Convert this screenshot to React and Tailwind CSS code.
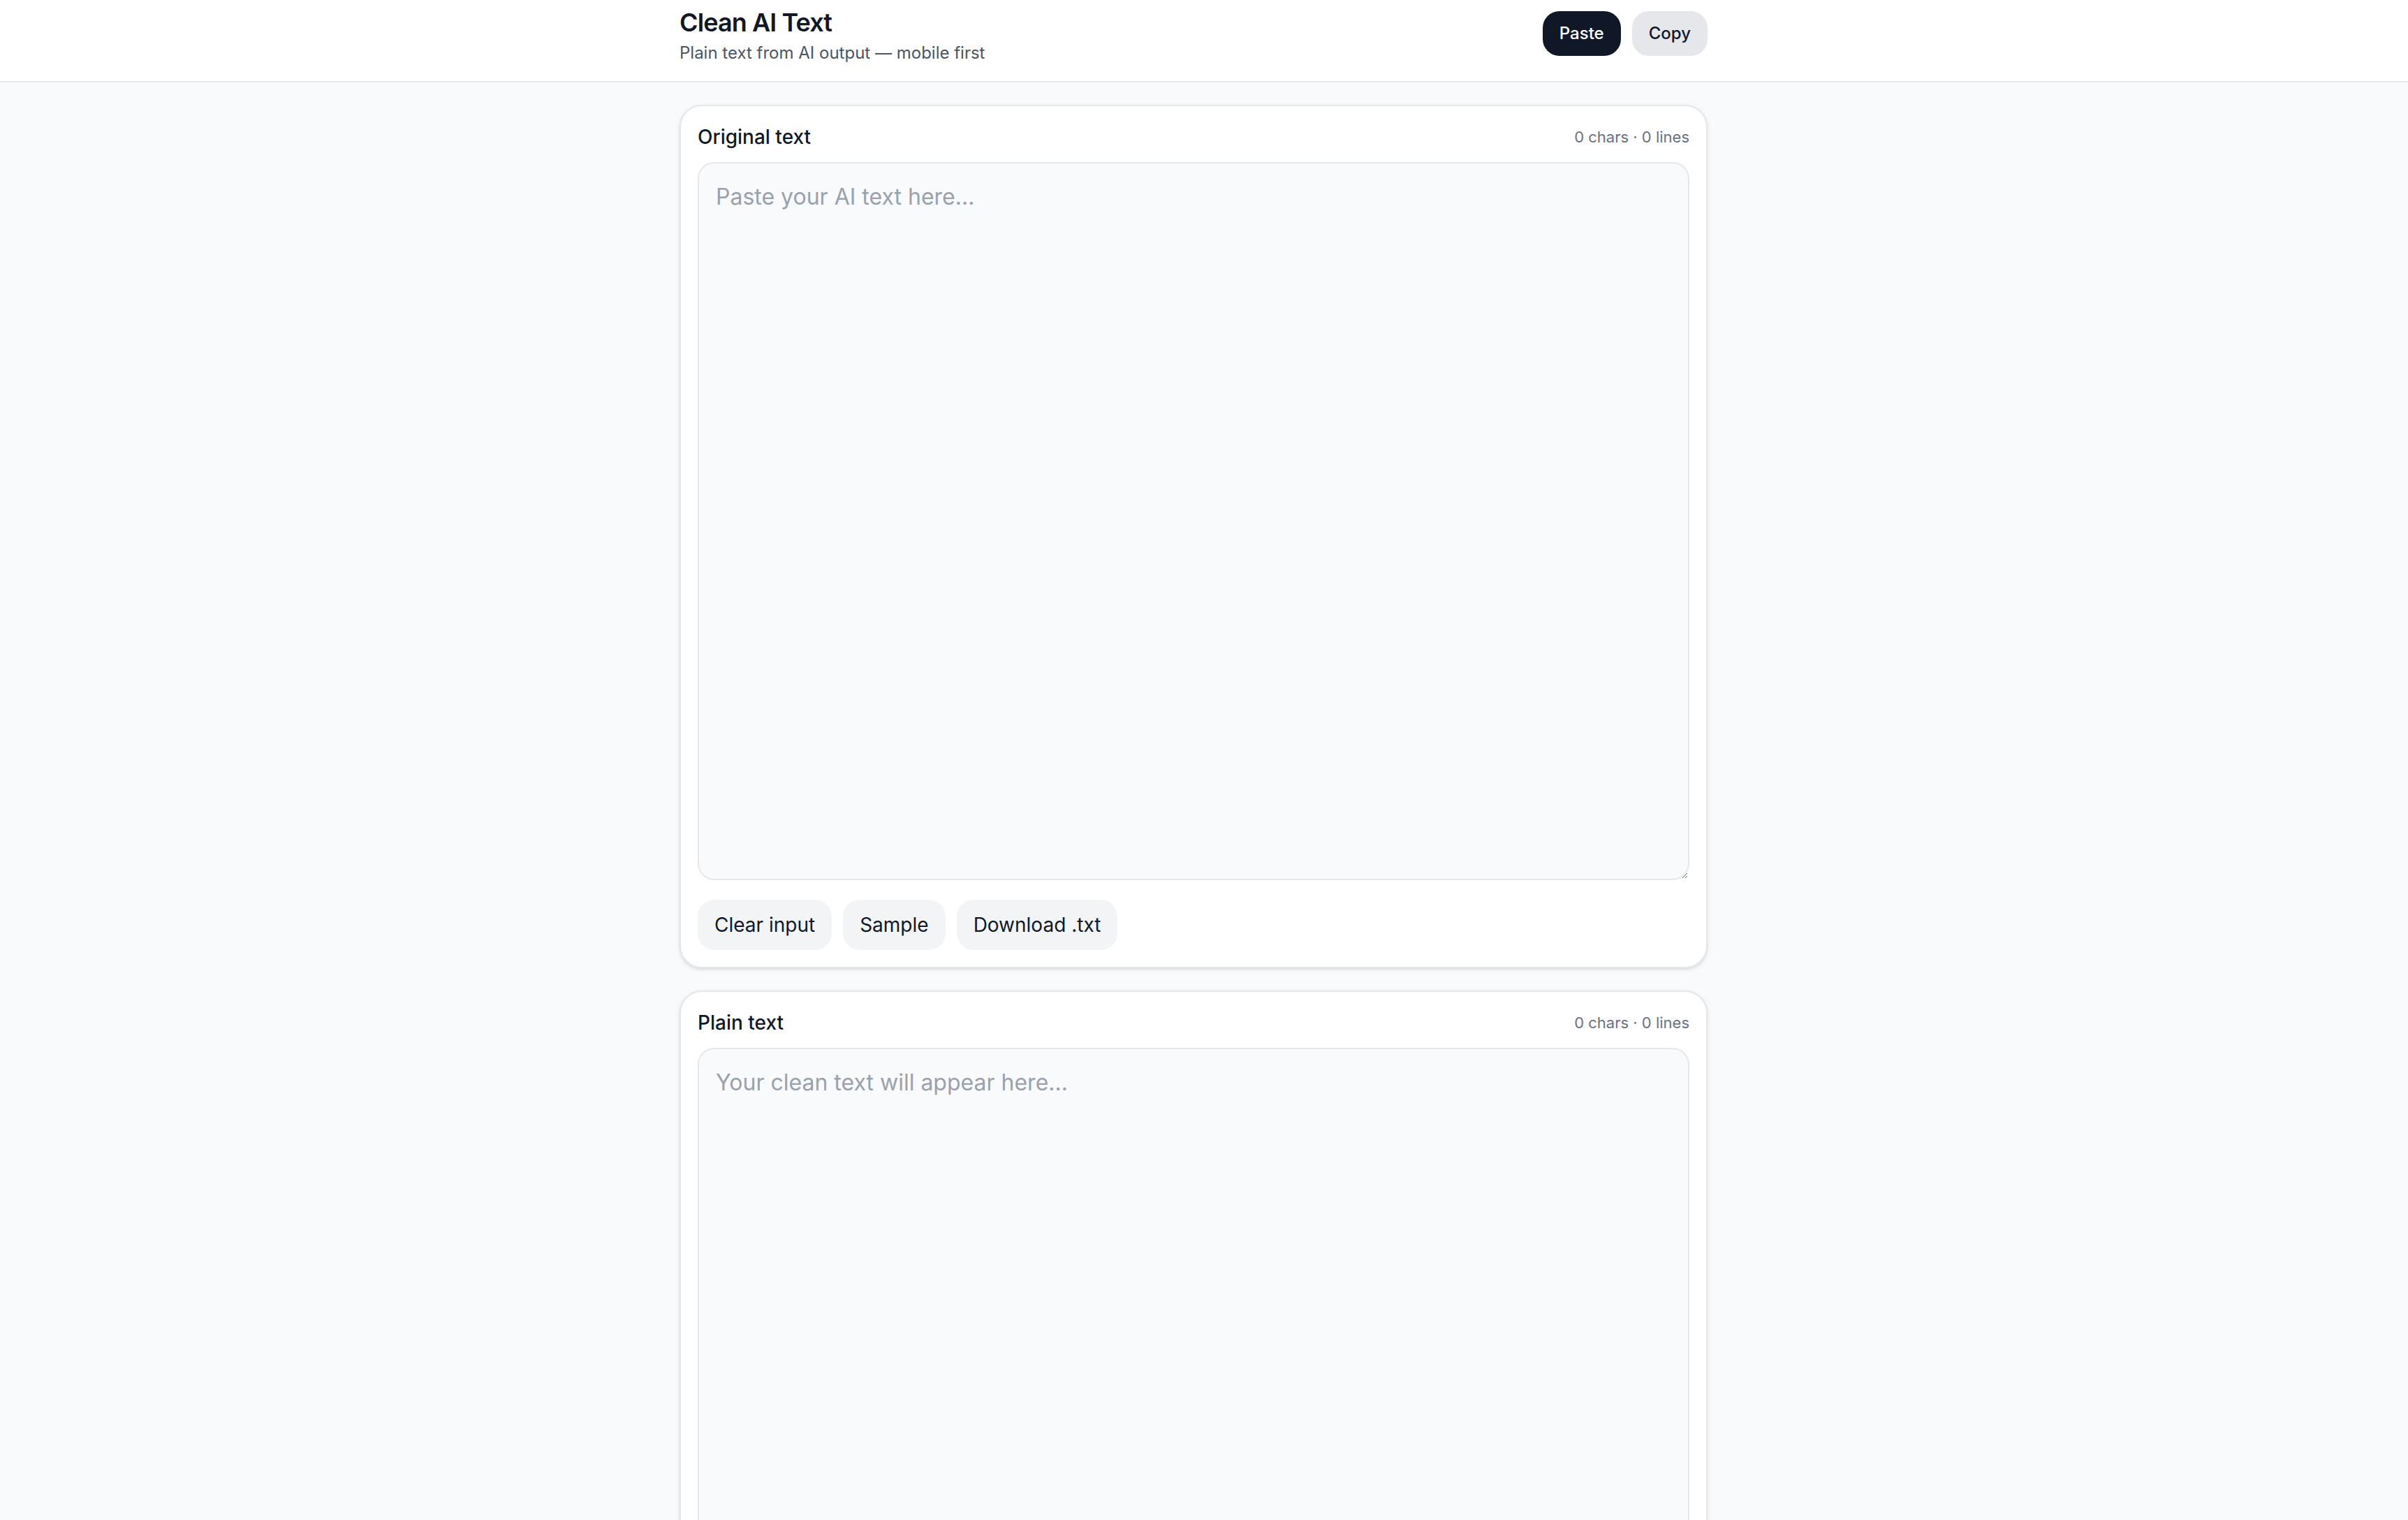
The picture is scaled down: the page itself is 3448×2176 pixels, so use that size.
import React, { useState } from "react";

const Panel = ({ title, placeholder, value, onChange, readOnly, children }) => {
  const chars = value.length;
  const lines = value ? value.split("\n").length : 0;
  return (
    <section className="bg-white border border-gray-200 rounded-2xl shadow-sm p-3">
      <div className="flex items-center justify-between mb-2">
        <h2 className="text-sm font-medium text-gray-900">{title}</h2>
        <span className="text-[11px] text-gray-500">
          {chars} chars · {lines} lines
        </span>
      </div>
      <textarea
        className="block w-full h-[514px] p-3 text-base leading-6 text-gray-900 bg-gray-50 border border-gray-200 rounded-xl placeholder:text-gray-400 focus:outline-none"
        placeholder={placeholder}
        value={value}
        readOnly={readOnly}
        onChange={(e) => onChange && onChange(e.target.value)}
      />
      {children}
    </section>
  );
};

const App = () => {
  const [input, setInput] = useState("");
  const output = input.replace(/[*_#`>]/g, "");

  return (
    <div className="min-h-screen bg-gray-50 font-['Inter',sans-serif]">
      <div className="[zoom:2]">
        <header className="bg-white border-b border-gray-200">
          <div className="pr-[15px]">
            <div className="max-w-3xl mx-auto px-4 pt-0.5 pb-3 flex items-center justify-between">
              <div>
                <h1 className="text-lg leading-7 font-semibold tracking-tight text-gray-900">
                  Clean AI Text
                </h1>
                <p className="text-xs text-gray-600">Plain text from AI output — mobile first</p>
              </div>
              <div className="flex items-center gap-2">
                <button className="px-3 py-2 rounded-xl bg-gray-900 text-white text-xs font-medium">
                  Paste
                </button>
                <button className="px-3 py-2 rounded-xl bg-gray-200 text-gray-900 text-xs font-medium">
                  Copy
                </button>
              </div>
            </div>
          </div>
        </header>

        <div className="pr-[15px]">
          <main className="max-w-3xl mx-auto px-4 py-4 space-y-4">
            <Panel
              title="Original text"
              placeholder="Paste your AI text here..."
              value={input}
              onChange={setInput}
            >
              <div className="flex items-center gap-2 mt-3.5">
                <button
                  className="px-3 py-2 rounded-xl bg-gray-100 text-sm text-gray-900"
                  onClick={() => setInput("")}
                >
                  Clear input
                </button>
                <button className="px-3 py-2 rounded-xl bg-gray-100 text-sm text-gray-900">
                  Sample
                </button>
                <button className="px-3 py-2 rounded-xl bg-gray-100 text-sm text-gray-900">
                  Download .txt
                </button>
              </div>
            </Panel>

            <Panel
              title="Plain text"
              placeholder="Your clean text will appear here..."
              value={output}
              readOnly
            />
          </main>
        </div>
      </div>
    </div>
  );
};

export default App;
